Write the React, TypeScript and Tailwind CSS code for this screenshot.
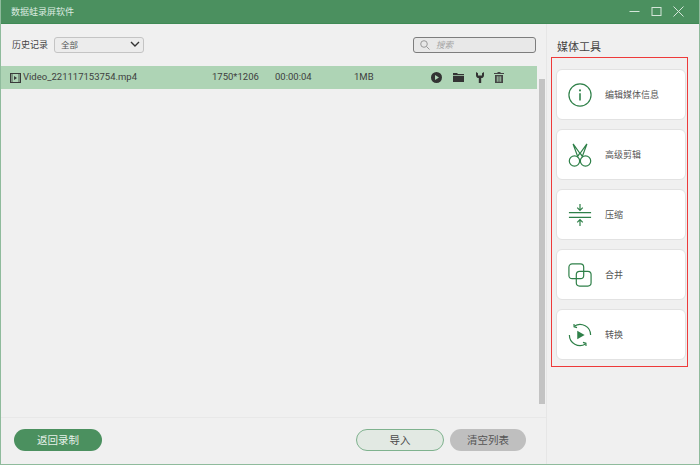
import React from "react";

const G = "#2f8049";

function Info() {
  return (
    <svg width="24" height="24" viewBox="0 0 26 26" fill="none" stroke={G} strokeWidth="1.3">
      <circle cx="13" cy="13" r="12" />
      <circle cx="13" cy="8" r="1.1" fill={G} stroke="none" />
      <path d="M13 11v8" strokeWidth="1.7" />
    </svg>
  );
}
function Scissors() {
  return (
    <svg width="24" height="24" viewBox="0 0 26 26" fill="none" stroke={G} strokeWidth="1.3">
      <circle cx="7" cy="19.5" r="5.6" />
      <circle cx="19" cy="19.5" r="5.6" />
      <path d="M5.5 1 L10.5 14.5 L12.8 11 L5.5 1" />
      <path d="M20.5 1 L15.5 14.5 L13.2 11 L20.5 1" />
    </svg>
  );
}
function Compress() {
  return (
    <svg width="24" height="24" viewBox="0 0 26 26" fill="none" stroke={G} strokeWidth="1.3">
      <path d="M1 10.5h24M1 15.5h24" />
      <path d="M13 1v6.5M10 5l3 3 3-3M13 25v-6.5M10 21l3-3 3 3" />
    </svg>
  );
}
function Merge() {
  return (
    <svg width="24" height="24" viewBox="0 0 26 26" fill="none" stroke={G} strokeWidth="1.3">
      <rect x="1" y="1" width="16" height="16" rx="3.5" />
      <rect x="9" y="9" width="16" height="16" rx="3.5" />
    </svg>
  );
}
function Convert() {
  return (
    <svg width="24" height="24" viewBox="0 0 26 26" fill="none" stroke={G} strokeWidth="1.3">
      <path d="M24.5 13A11.5 11.5 0 0 0 7 3.2" />
      <path d="M6.5 1 L6.6 4 L9.8 5" />
      <path d="M1.5 13A11.5 11.5 0 0 0 19 22.8" />
      <path d="M19.5 25 L19.4 22 L16.2 21" />
      <path d="M10 8.5 L18 13 L10 17.5 Z" fill={G} stroke="none" />
    </svg>
  );
}

const tools = [
  { label: "编辑媒体信息", icon: <Info /> },
  { label: "高级剪辑", icon: <Scissors /> },
  { label: "压缩", icon: <Compress /> },
  { label: "合并", icon: <Merge /> },
  { label: "转换", icon: <Convert /> },
];

export default function App() {
  return (
    <div className="w-[700px] h-[465px] flex flex-col bg-[#f0f0f0] border-x border-b border-[#8fbb9c] text-[#3d3d3d] font-['Roboto','Noto_Sans_CJK_SC',sans-serif] text-[9px] overflow-hidden">
      <div className="h-6 -mx-px shrink-0 bg-[#4b905f] border-b border-[#3f8a55] flex items-center pl-[11px] pr-[16px] text-[#dcebe0] text-[9px]">
        <span className="flex-1 pt-[2px]">数据蛙录屏软件</span>
        <div className="flex items-center gap-[11px]">
          <svg width="11" height="11" viewBox="0 0 11 11" fill="none" stroke="#d5e6da" strokeWidth="1"><path d="M0.5 5.5h10" /></svg>
          <svg width="11" height="11" viewBox="0 0 11 11" fill="none" stroke="#d5e6da" strokeWidth="1"><rect x="1" y="1.5" width="9" height="8" /></svg>
          <svg width="11" height="11" viewBox="0 0 11 11" fill="none" stroke="#d5e6da" strokeWidth="1"><path d="M0.5 0.5l10 10M10.5 0.5l-10 10" /></svg>
        </div>
      </div>
      <div className="flex-1 flex min-h-0">
        <div className="w-[546px] shrink-0 flex flex-col border-r border-[#e6e6e6]">
          <div className="h-[42px] shrink-0 flex items-center pl-[11px] pr-[10px] pb-[1px]">
            <span className="mr-[6px] pt-[2px] text-[#444]">历史记录</span>
            <div className="w-[90px] h-[16px] border border-[#c4c4c4] rounded-[3px] bg-[#ececec] flex items-center pl-[6px] pr-[3px] text-[8.5px] text-[#555]">
              <span className="flex-1 pt-[2px]">全部</span>
              <svg width="10" height="7" viewBox="0 0 10 7" fill="none" stroke="#333" strokeWidth="1.4"><path d="M1 1l4 4 4-4" /></svg>
            </div>
            <div className="flex-1" />
            <div className="w-[123px] h-[16px] border border-[#7d7d7d] rounded-[3px] bg-[#e8e8e8] flex items-center pl-[6px] text-[8.5px] text-[#a5a5a5] italic">
              <svg className="mr-[6px]" width="10" height="10" viewBox="0 0 10 10" fill="none" stroke="#999" strokeWidth="1"><circle cx="4" cy="4" r="3.3" /><path d="M6.5 6.5L9.5 9.5" /></svg>
              <span className="pt-[2px]">搜索</span>
            </div>
          </div>
          <div className="flex-1 flex min-h-0">
            <div className="w-[536px] shrink-0">
              <div className="h-[23px] bg-[#aed4b5] flex items-center text-[#404040]">
                <svg className="ml-[9px] mr-[2px] shrink-0" width="11" height="10" viewBox="0 0 11 10" fill="none" stroke="#3a3a3a" strokeWidth="1"><rect x="0.5" y="0.5" width="10" height="9" /><path d="M2 1v8M9 1v8" strokeWidth="0.8" /><path d="M4 3l3 2-3 2z" fill="#3a3a3a" stroke="none" /></svg>
                <span className="w-[189px] shrink-0 text-[9.5px]">Video_221117153754.mp4</span>
                <span className="w-[63px] shrink-0 text-[9.5px]">1750*1206</span>
                <span className="w-[79px] shrink-0 text-[9.5px]">00:00:04</span>
                <span className="w-[77px] shrink-0 text-[9.5px]">1MB</span>
                <svg className="shrink-0" width="11" height="11" viewBox="0 0 11 11"><circle cx="5.5" cy="5.5" r="5.5" fill="#333" /><path d="M4 3l4 2.5L4 8z" fill="#aed4b5" /></svg>
                <svg className="ml-[11px] shrink-0" width="11" height="9" viewBox="0 0 11 9"><path d="M0 0h4l1 1h6v1.3H0zM0 3h11v6H0z" fill="#333" /></svg>
                <svg className="ml-[12px] shrink-0" width="8" height="11" viewBox="0 0 8 11"><path d="M0 0v3.2a3 3 0 0 0 2.8 2.9V11h2.4V6.1A3 3 0 0 0 8 3.2V0L6 1.2V3.4H2V1.2z" fill="#333" /></svg>
                <svg className="ml-[10px] shrink-0" width="10" height="11" viewBox="0 0 10 11"><path d="M3.5 0h3v1H10v1H0V1h3.5zM1 3h8v8H1zM2.8 4.2v5.6h.9V4.2zM4.55 4.2v5.6h.9V4.2zM6.3 4.2v5.6h.9V4.2z" fill="#444" fillRule="evenodd" /></svg>
              </div>
            </div>
            <div className="flex-1 pt-[13px] pb-[13px] pl-[2px] pr-[1px] flex">
              <div className="flex-1 bg-[#c3c3c3]" />
            </div>
          </div>
          <div className="h-[47px] shrink-0 border-t border-[#e8e8e8] flex items-center pl-[13px] pr-[20px] pb-[3px] text-[10.5px]">
            <div className="w-[88px] h-[22px] pt-[2px] rounded-full bg-[#4b905f] text-[#e6f1e9] flex items-center justify-center">返回录制</div>
            <div className="flex-1" />
            <div className="w-[88px] h-[22px] pt-[2px] rounded-full bg-[#e2e9e3] border border-[#7fb28e] text-[#4a4a4a] flex items-center justify-center">导入</div>
            <div className="w-[76px] h-[22px] pt-[2px] ml-[6px] rounded-full bg-[#bfbfbf] text-[#555] flex items-center justify-center">清空列表</div>
          </div>
        </div>
        <div className="flex-1 flex flex-col pl-[4px] pr-[11px]">
          <div className="h-[33px] shrink-0 flex items-center pl-[6px] pt-[16px] text-[11px] text-[#444]">媒体工具</div>
          <div className="h-[310px] border border-[#ee3a3a] pt-[11px] pl-[4px] pr-[1px] flex flex-col gap-[9px]">
            {tools.map((t) => (
              <div key={t.label} className="h-[51px] shrink-0 bg-white border border-[#e2e2e2] rounded-[6px] flex items-center pl-[11px] text-[9px] text-[#555]">
                <span className="w-[24px] h-[24px] mr-[13px] shrink-0 flex">{t.icon}</span>
                <span className="pt-[2px]">{t.label}</span>
              </div>
            ))}
          </div>
        </div>
      </div>
    </div>
  );
}
